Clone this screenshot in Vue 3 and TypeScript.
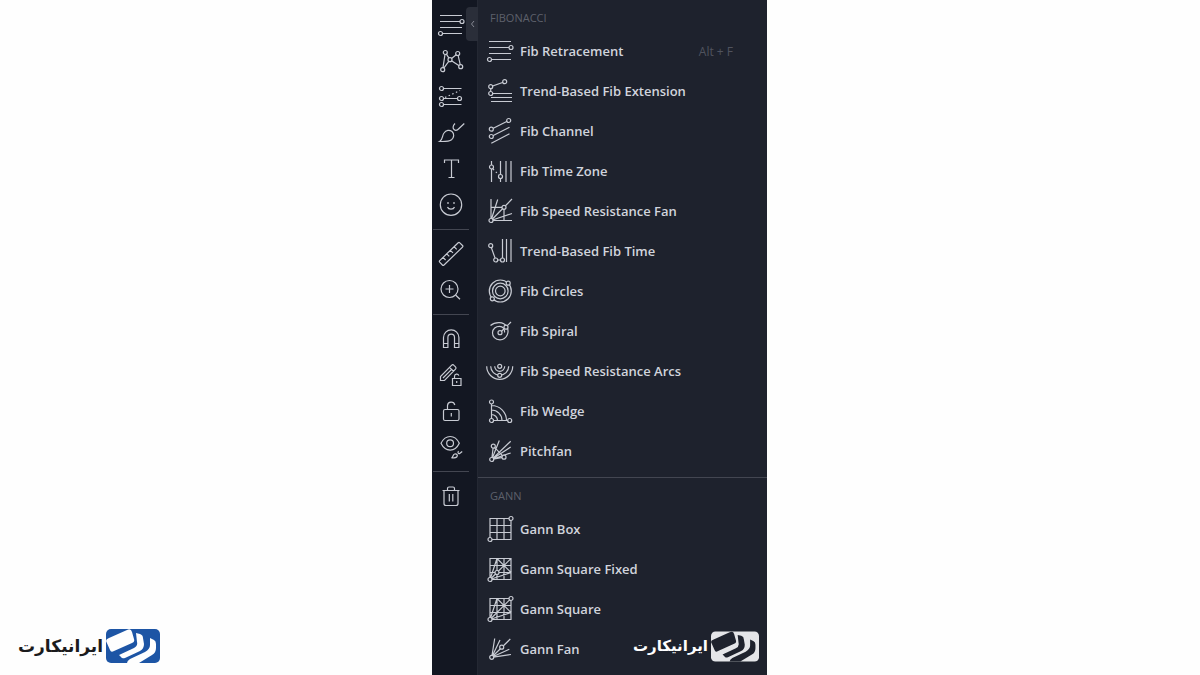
<script setup lang="ts">
interface Icon {
  d: string
  dots?: [number, number][]
  rings?: [number, number, number][]
  dotted?: string
}

interface Tool {
  label: string
  icon: Icon
  shortcut?: string
}

const grid = 'M4 3.5H25V24.5H4ZM11 3.5V24.5M18 3.5V24.5M4 10.5H25M4 17.5H25'
const gridRays = grid + 'M4 24.5L25 3.5M4 24.5L11 3.5M4 24.5L25 17.5M11 3.5L25 17.5'

const cards =
  'M0 12Q0 10 3 9L21 1Q25 -1 26 3L28 10Q29 13 26 14L8 22Q5 24 4 21Z' +
  'M30 4L34 5Q37 6 37 9L38 15Q38 20 34 22L19 29Q16 30 15 28L13 26L28 19Q32 17 31 13Z' +
  'M44 9L48 11Q50 12 50 15V19Q50 24 46 26L33 34H21Q21 32 24 30L39 23Q44 20 44 16Z'

const retracement: Icon = {
  d: 'M3 4.5H25M3 10.5H25M3 16.5H25M3 22.5H25',
  dots: [[25, 10.5], [3.5, 22.5]],
}

const toolGroups: Tool[][] = [
  [
    { label: 'Fib Retracement', icon: retracement },
    {
      label: 'Patterns',
      icon: {
        d: 'M5.7 22.7L8.3 5.5L13 12.7L23.7 19.7L20.7 6.5L13 12.7Z',
        dots: [[8.3, 5.5], [20.7, 6.5], [5.7, 22.7], [23.7, 19.7], [13, 12.7]],
      },
    },
    {
      label: 'Prediction and measurement',
      icon: {
        d: 'M4.5 5.5H24.5M4.5 15.5H22.5M4.5 21.5H24.5',
        dotted: 'M8 14.5L23 7.5',
        dots: [[4.5, 5.5], [4.5, 15.5], [22.5, 15.5], [4.5, 21.5]],
      },
    },
    {
      label: 'Brush',
      icon: {
        d: 'M2.7 22.5C6 20.5 5 16.5 7 14C9 11 12.5 10.5 15 12.5C17.5 14.7 17.2 18.5 14.5 20.8C12 22.8 8 22.5 2.7 22.5ZM18 4.5C15.5 7 15.8 9.5 17 10.5C18.5 11.7 20.5 11.2 22 9.5L27.3 4.5',
      },
    },
    { label: 'Text', icon: { d: 'M7.5 8V5H21.5V8M14.5 5V22.5M11.5 22.5H17.5' } },
    {
      label: 'Icons',
      icon: {
        d: 'M11 11V13M17 11V13M10.5 16C11.5 18.8 16.5 18.8 17.5 16',
        rings: [[14, 13.7, 10.7]],
      },
    },
  ],
  [
    {
      label: 'Measure',
      icon: {
        d: 'M2.7 20.6L21.2 2.8Q22 2 22.8 2.8L25.5 5.5Q26.3 6.3 25.5 7.1L7 25Q6.2 25.8 5.4 25L2.7 22.2Q2 21.4 2.7 20.6ZM6 17.4L8.6 20M9.7 13.8L12.3 16.4M13.4 10.3L16 12.9M17.1 6.7L19.7 9.3',
      },
    },
    {
      label: 'Zoom In',
      icon: { d: 'M18.8 19.2L23 23.3M12.5 9V17M8.5 13H16.5', rings: [[12.5, 13, 8.5]] },
    },
  ],
  [
    {
      label: 'Magnet Mode',
      icon: { d: 'M6.5 22.5V12.5A7.7 7.7 0 0 1 21.9 12.5V22.5H17.5V12.5A3.3 3.3 0 0 0 10.9 12.5V22.5ZM6.5 18.5H10.9M17.5 18.5H21.9' },
    },
    {
      label: 'Stay in Drawing Mode',
      icon: {
        d: 'M3.5 19.5V15.5L14.5 4.3Q15.8 3 17 4.3L18.5 5.8Q19.6 7 18.5 8.2L7.5 19.5ZM12.5 6.4L16.5 10.3M6 17L14.6 8.4M15.5 17.5H24V24.5H15.5ZM17.5 17.5V15.5A2.2 2.2 0 0 1 21.8 14.7M19.7 20V22',
      },
    },
    {
      label: 'Lock All Drawing Tools',
      icon: { d: 'M8 12.5H20.5Q22 12.5 22 14V22Q22 23.5 20.5 23.5H8Q6.5 23.5 6.5 22V14Q6.5 12.5 8 12.5ZM10.5 12.5V8.5A3.7 3.7 0 0 1 17.8 8M14.3 16V19.5' },
    },
    {
      label: 'Hide All Drawing Tools',
      icon: {
        d: 'M4 10.3C8.5 1.2 18 1.2 22.3 10.3C18 19.4 8.5 19.4 4 10.3ZM14.5 25C16.5 24 15.5 21.8 17.7 21C19.5 20.5 21 22 20 23.6C19 25.2 17 25 14.5 25ZM21.5 18C20.3 19.5 21.5 21.5 23 20.3L25.2 18.5',
        rings: [[13.1, 10.3, 3.4]],
      },
    },
  ],
  [
    {
      label: 'Remove Drawings',
      icon: { d: 'M5.5 8.5H22.5M7 8.5V21.5Q7 23.5 9 23.5H19Q21 23.5 21 21.5V8.5M10.5 8.5V6.5Q10.5 5 12 5H16Q17.5 5 17.5 6.5V8.5M12.3 12V19.5M15.8 12V19.5' },
    },
  ],
]

const menu: { title: string; items: Tool[] }[] = [
  {
    title: 'FIBONACCI',
    items: [
      { label: 'Fib Retracement', icon: retracement, shortcut: 'Alt + F' },
      {
        label: 'Trend-Based Fib Extension',
        icon: {
          d: 'M18.7 4.7L4.7 9.7V16.5H26M5 20.5H26M5 24.5H26',
          dots: [[18.7, 4.7], [4.7, 9.7], [4.7, 16.5]],
        },
      },
      {
        label: 'Fib Channel',
        icon: {
          d: 'M5.3 12.2L22.7 3.5M5.3 19.5L23.5 10.2M5.3 26.3L23.5 16.8',
          dots: [[22.7, 3.5], [5.3, 12.2], [5.3, 19.5]],
        },
      },
      {
        label: 'Fib Time Zone',
        icon: {
          d: 'M5.5 4V25M14.5 4V25M20 4V25M25 4V25',
          dotted: 'M7 12L13 18',
          dots: [[5.5, 10], [14.5, 19.5]],
        },
      },
      {
        label: 'Fib Speed Resistance Fan',
        icon: {
          d: 'M5 2V23.5H26M5 10.3H18V23.5M5 23.5L26 2M5 23.5L11.7 2.5M5 23.5L26 16.5',
          dots: [[5, 23.5], [18, 10.3]],
        },
      },
      {
        label: 'Trend-Based Fib Time',
        icon: {
          d: 'M4.7 8.7L9.7 23H16.5V2M20.5 2V25M25 2V25',
          dots: [[4.7, 8.7], [9.7, 23], [16.5, 23]],
        },
      },
      {
        label: 'Fib Circles',
        icon: {
          d: '',
          rings: [[14.3, 14, 11], [14.3, 14, 7.8], [14.3, 14, 4.8]],
          dots: [[22.2, 6.2], [6.3, 21.8]],
        },
      },
      {
        label: 'Fib Spiral',
        icon: {
          d: 'M14 15.7L25 5M4.5 8.5C9 4.5 18 4.5 20.5 9.5C24 14.5 21 22.8 14 22.8C9 22.8 6.5 19.5 6.5 15.7C6.5 11.5 10 9.3 13.5 9.3C17 9.3 19 12 18.5 15.5',
          dots: [[14, 15.7], [20, 10.2]],
        },
      },
      {
        label: 'Fib Speed Resistance Arcs',
        icon: {
          d: 'M.7 9.3A13 13 0 0 0 26.7 9.3M4.7 9.3A9 9 0 0 0 22.7 9.3M8.7 9.3A5 5 0 0 0 18.7 9.3',
          dots: [[13.7, 9.3], [13.7, 18.3]],
        },
      },
      {
        label: 'Fib Wedge',
        icon: {
          d: 'M5.5 5V23.5H23.5M5.5 8.5A15 15 0 0 1 20.5 23.5M5.5 13A10.5 10.5 0 0 1 16 23.5M5.5 17.5A6 6 0 0 1 11.5 23.5',
          dots: [[5.5, 5], [5.5, 23.5], [23.7, 23.5]],
        },
      },
      {
        label: 'Pitchfan',
        icon: {
          d: 'M5.7 22.5L13.3 3.5M5.7 22.5L24.7 4.2M5.7 22.5L24.7 10M5.7 22.5L24.7 16M7.3 9.2L18 20.2M5.7 22.5L7.3 9.2M5.7 22.5L18 20.2',
          dots: [[5.7, 22.5], [7.3, 9.2], [18, 20.2]],
        },
      },
    ],
  },
  {
    title: 'GANN',
    items: [
      { label: 'Gann Box', icon: { d: grid, dots: [[25, 3.5], [4, 24.5]] } },
      { label: 'Gann Square Fixed', icon: { d: gridRays, dots: [[4, 24.5], [11, 17.5]] } },
      { label: 'Gann Square', icon: { d: gridRays, dots: [[25, 3.5], [4, 24.5]] } },
      {
        label: 'Gann Fan',
        icon: {
          d: 'M5.7 22.3L8.7 3.5M5.7 22.3L14 5M5.7 22.3L24.3 4M5.7 22.3L23.3 14.3M5.7 22.3L25 19.5',
          dots: [[5.7, 22.3], [15.7, 12.2]],
        },
      },
    ],
  },
]
</script>

<template>
  <main class="page">
    <aside class="left">
      <div class="brand brand-dark">
        <span class="brand-name" lang="fa" dir="rtl">ایرانیکارت</span>
        <svg class="brand-mark" viewBox="0 0 54 34" aria-hidden="true">
          <rect class="mark-base" width="54" height="34" rx="5" />
          <path class="mark-card" :d="cards" />
        </svg>
      </div>
    </aside>

    <section class="app">
      <nav class="toolbar" aria-label="Drawing tools">
        <div v-for="(group, g) in toolGroups" :key="g" class="group">
          <button v-for="tool in group" :key="tool.label" type="button" class="tool" :aria-label="tool.label">
            <svg class="icon" viewBox="0 0 28 28" aria-hidden="true">
              <path :d="tool.icon.d" />
              <path v-if="tool.icon.dotted" class="dotted" :d="tool.icon.dotted" />
              <circle v-for="(r, i) in tool.icon.rings" :key="'r' + i" :cx="r[0]" :cy="r[1]" :r="r[2]" />
              <circle v-for="(p, i) in tool.icon.dots" :key="i" class="dot" :cx="p[0]" :cy="p[1]" r="2" />
            </svg>
          </button>
        </div>
        <button type="button" class="collapse" aria-label="Close menu">
          <svg viewBox="0 0 6 8" aria-hidden="true"><path d="M4 1L1.5 4L4 7" /></svg>
        </button>
      </nav>

      <div class="menu">
        <section v-for="section in menu" :key="section.title" class="section">
          <h2>{{ section.title }}</h2>
          <button v-for="item in section.items" :key="item.label" type="button" class="item">
            <svg class="icon" viewBox="0 0 28 28" aria-hidden="true">
              <path :d="item.icon.d" />
              <path v-if="item.icon.dotted" class="dotted" :d="item.icon.dotted" />
              <circle v-for="(r, i) in item.icon.rings" :key="'r' + i" :cx="r[0]" :cy="r[1]" :r="r[2]" />
              <circle v-for="(p, i) in item.icon.dots" :key="i" class="dot" :cx="p[0]" :cy="p[1]" r="2" />
            </svg>
            <span class="label">{{ item.label }}</span>
            <kbd v-if="item.shortcut">{{ item.shortcut }}</kbd>
          </button>
        </section>
        <div class="brand brand-light">
          <span class="brand-name" lang="fa" dir="rtl">ایرانیکارت</span>
          <svg class="brand-mark" viewBox="0 0 54 34" aria-hidden="true">
            <rect class="mark-base" width="54" height="34" rx="5" />
            <path class="mark-card" :d="cards" />
          </svg>
        </div>
      </div>
    </section>
  </main>
</template>

<style>
body {
  margin: 0;
  background: #fefefe;
}
</style>

<style scoped>
.page {
  display: grid;
  grid-template-columns: 36% auto 1fr;
  min-height: 100vh;
  font-family: "Open Sans", "Noto Sans", sans-serif;
}

.left {
  display: flex;
  align-items: flex-end;
  padding: 12px 18px;
}

.app {
  display: flex;
  background: #1e222d;
  color: #d1d4dc;
}

button {
  margin: 0;
  padding: 0;
  border: 0;
  background: none;
  color: inherit;
  font: inherit;
  cursor: pointer;
}

.toolbar {
  --surface: #131722;
  position: relative;
  z-index: 1;
  width: 45px;
  padding-top: 7px;
  background: var(--surface);
}

.group + .group {
  margin-top: 6px;
}

.group + .group::before {
  content: "";
  display: block;
  width: 36px;
  height: 1px;
  margin: 0 0 6px 1px;
  background: #434651;
}

.tool {
  display: flex;
  align-items: center;
  justify-content: center;
  width: 38px;
  height: 36px;
}

.icon {
  flex: none;
  width: 28px;
  height: 28px;
  fill: none;
  stroke: #c8cbd3;
  stroke-width: 1.2;
}

.dot {
  fill: var(--surface);
}

.dotted {
  stroke-dasharray: 1.5 2.5;
}

.collapse {
  position: absolute;
  top: 7px;
  right: -1px;
  display: flex;
  align-items: center;
  justify-content: center;
  width: 12px;
  height: 34px;
  padding-left: 2px;
  border-radius: 4px 0 0 4px;
  background: #2a2e39;
}

.collapse svg {
  flex: none;
  width: 6px;
  height: 8px;
  fill: none;
  stroke: #868993;
}

.menu {
  --surface: #1e222d;
  position: relative;
  box-sizing: border-box;
  width: 290px;
  border-left: 1px solid #242833;
}

.section {
  padding-top: 7px;
}

.section + .section {
  margin-top: 6px;
  border-top: 1px solid #434651;
}

h2 {
  margin: 0;
  padding: 0 0 2px 12px;
  color: #5d606b;
  font-size: 11px;
  font-weight: 400;
  line-height: 22px;
}

.item {
  display: flex;
  align-items: center;
  gap: 6px;
  width: 100%;
  height: 40px;
  padding: 0 34px 0 8px;
  text-align: left;
}

.label {
  flex: 1;
  font-size: 13px;
  font-weight: 600;
  white-space: nowrap;
}

kbd {
  color: #50535e;
  font-family: inherit;
  font-size: 12px;
}

.brand {
  display: flex;
  align-items: center;
  gap: 3px;
}

.brand-name {
  font-family: "DejaVu Sans", sans-serif;
  font-size: 17px;
  font-weight: 700;
  line-height: 34px;
  white-space: nowrap;
}

.brand-mark {
  width: 54px;
  height: 34px;
}

.brand-dark {
  color: #1b1b1d;
}

.brand-dark .mark-base {
  fill: #1d55a5;
}

.brand-dark .mark-card {
  fill: #fefefe;
}

.brand-light {
  position: absolute;
  right: 8px;
  bottom: 12px;
  color: #fff;
}

.brand-light .brand-name {
  font-size: 15px;
}

.brand-light .brand-mark {
  width: 48px;
  height: 31px;
}

.brand-light .mark-base {
  fill: #e4e5e8;
}

.brand-light .mark-card {
  fill: #1e222d;
}
</style>
